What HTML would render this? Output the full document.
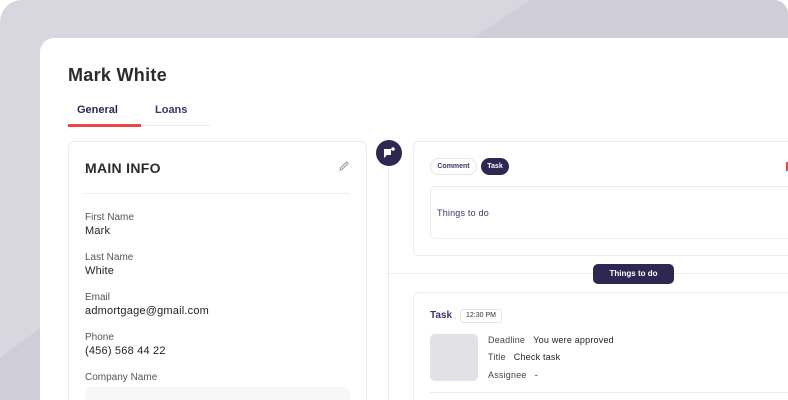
<!DOCTYPE html>
<html><head><style>
*{margin:0;padding:0;box-sizing:border-box}
html,body{width:788px;height:400px;overflow:hidden}
body{background:#fff;font-family:"Liberation Sans",sans-serif;position:relative}
.bg{position:absolute;left:0;top:0;width:788px;height:400px;border-radius:22px 14px 0 0;background:#d8d7e0;overflow:hidden}
.card{position:absolute;left:40px;top:38px;width:748px;height:362px;background:#fff;border-radius:14px 0 0 0}
.abs{position:absolute}
.lbl{font-size:10px;color:#555}
.val{font-size:11px;color:#222;margin-top:2px;letter-spacing:0.2px}
</style></head><body>
<div class="bg"><svg width="788" height="400" style="position:absolute;left:0;top:0"><polygon points="470,40 530,0 788,0 788,40" fill="#cecdd8"/><polygon points="0,358 40,328 40,400 0,400" fill="#cecdd8"/></svg></div>
<div class="card"></div>
<div class="abs" style="left:68px;top:65px;font-size:18px;font-weight:bold;color:#2b2b2b;letter-spacing:0.3px">Mark White</div>
<div class="abs" style="left:77px;top:104px;font-size:11px;font-weight:bold;color:#2d2650">General</div>
<div class="abs" style="left:155px;top:104px;font-size:11px;font-weight:bold;color:#3c3566">Loans</div>
<div class="abs" style="left:68px;top:125px;width:142px;height:1px;background:#ececef"></div>
<div class="abs" style="left:68px;top:124px;width:73px;height:3px;background:#ef4444"></div>
<div class="abs" style="left:68px;top:141px;width:299px;height:270px;border:1px solid #ececef;border-radius:6px"></div>
<div class="abs" style="left:85px;top:160px;font-size:14px;font-weight:bold;color:#2b2b2b;letter-spacing:0.3px">MAIN INFO</div>
<svg class="abs" style="left:338px;top:160px" width="12" height="12"><path d="M2 10 L2.5 8 L8.5 2 L10 3.5 L4 9.5 Z" fill="none" stroke="#999" stroke-width="1"/></svg>
<div class="abs" style="left:85px;top:193px;width:265px;height:1px;background:#ececef"></div>
<div class="abs" style="left:85px;top:212px"><div class="lbl">First Name</div><div class="val">Mark</div></div>
<div class="abs" style="left:85px;top:252px"><div class="lbl">Last Name</div><div class="val">White</div></div>
<div class="abs" style="left:85px;top:292px"><div class="lbl">Email</div><div class="val">admortgage@gmail.com</div></div>
<div class="abs" style="left:85px;top:332px"><div class="lbl">Phone</div><div class="val">(456) 568 44 22</div></div>
<div class="abs" style="left:85px;top:372px"><div class="lbl">Company Name</div></div>
<div class="abs" style="left:85px;top:387px;width:265px;height:13px;background:#f7f7f8;border-radius:6px 6px 0 0"></div>
<div class="abs" style="left:388px;top:160px;width:1px;height:240px;background:#ececef"></div>
<div class="abs" style="left:376px;top:140px;width:26px;height:26px;border-radius:50%;background:#2e2752"></div>
<svg class="abs" style="left:382px;top:146px" width="14" height="14"><path d="M2 3 H9 V9 H5 L2 12 Z" fill="#fff"/><circle cx="11" cy="3" r="1.8" fill="#fff"/></svg>
<div class="abs" style="left:388px;top:273px;width:400px;height:1px;background:#ececef"></div>
<div class="abs" style="left:413px;top:141px;width:390px;height:115px;border:1px solid #ececef;border-radius:6px"></div>
<div class="abs" style="left:430px;top:158px;width:47px;height:17px;border:1px solid #e6e6ea;border-radius:9px;font-size:7px;font-weight:bold;color:#3c3566;text-align:center;line-height:15px">Comment</div>
<div class="abs" style="left:481px;top:158px;width:28px;height:17px;background:#2e2752;border-radius:9px;font-size:7px;font-weight:bold;color:#fff;text-align:center;line-height:17px">Task</div>
<div class="abs" style="left:786px;top:162px;width:4px;height:9px;background:#ef4444"></div>
<div class="abs" style="left:430px;top:186px;width:370px;height:53px;border:1px solid #ececef;border-radius:5px"></div>
<div class="abs" style="left:437px;top:208px;font-size:9px;color:#3c3566;letter-spacing:0.2px">Things to do</div>
<div class="abs" style="left:593px;top:264px;width:81px;height:20px;background:#2e2752;border-radius:5px;font-size:8px;font-weight:bold;color:#fff;text-align:center;line-height:20px">Things to do</div>
<div class="abs" style="left:413px;top:292px;width:390px;height:120px;border:1px solid #ececef;border-radius:6px"></div>
<div class="abs" style="left:430px;top:310px;font-size:10px;font-weight:bold;color:#3c3566">Task</div>
<div class="abs" style="left:460px;top:309px;width:42px;height:14px;border:1px solid #e6e6ea;border-radius:3px;font-size:7px;color:#333;text-align:center;line-height:12px">12:30 PM</div>
<div class="abs" style="left:430px;top:334px;width:48px;height:47px;background:#e1e1e6;border-radius:5px"></div>
<div class="abs" style="left:488px;top:335px;font-size:9px;color:#444;letter-spacing:0.2px">Deadline&nbsp;&nbsp;&nbsp;<span style="color:#222">You were approved</span></div>
<div class="abs" style="left:488px;top:352px;font-size:9px;color:#444;letter-spacing:0.2px">Title&nbsp;&nbsp;&nbsp;<span style="color:#222">Check task</span></div>
<div class="abs" style="left:488px;top:370px;font-size:9px;color:#444;letter-spacing:0.2px">Assignee&nbsp;&nbsp;&nbsp;<span style="color:#222">-</span></div>
<div class="abs" style="left:430px;top:392px;width:370px;height:1px;background:#ececef"></div>
</body></html>
